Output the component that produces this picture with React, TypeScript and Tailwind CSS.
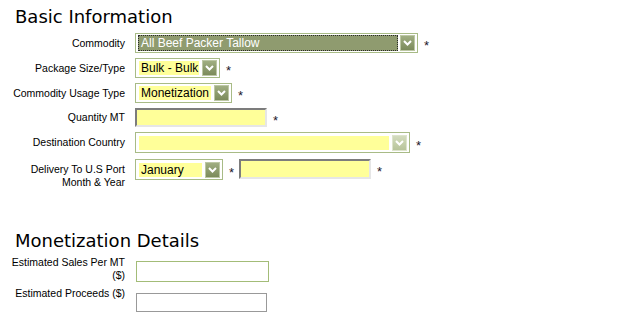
import React from "react";

const Chevron = () => (
  <svg width="9" height="6" viewBox="0 0 9 6">
    <path d="M1 1 L4.5 4.5 L8 1" stroke="white" strokeWidth="2" fill="none" />
  </svg>
);

function DropBtn({ light }: { light?: boolean }) {
  return (
    <div
      className={
        light
          ? "w-[15px] h-[16px] shrink-0 flex items-center justify-center border border-[#dde4cc] bg-linear-to-b from-[#d3dcbd] to-[#b8c49b]"
          : "w-[15px] h-[16px] shrink-0 flex items-center justify-center border border-[#bcc7a4] bg-linear-to-b from-[#a0ae82] to-[#7c8b5b]"
      }
    >
      <Chevron />
    </div>
  );
}

function Select({
  box,
  text,
  selected,
  light,
}: {
  box: string;
  text: string;
  selected?: boolean;
  light?: boolean;
}) {
  return (
    <div
      className={`${box} shrink-0 flex items-center border border-[#a8bb86] bg-white p-[2px] gap-[2px]`}
    >
      {selected ? (
        <div className="flex-1 h-[16px] bg-[#8f9b6f] border border-dotted border-[#2a2a2a] text-white text-[12px] leading-[14px] pl-[2px] whitespace-nowrap overflow-hidden">
          {text}
        </div>
      ) : (
        <div className="flex-1 h-[14px] mx-px bg-[#ffff99] text-black text-[12px] leading-[14px] pl-[2px] whitespace-nowrap overflow-hidden">
          {text}
        </div>
      )}
      <DropBtn light={light} />
    </div>
  );
}

const Star = () => (
  <span className="ml-[6px] text-[13px] leading-[13px] pt-[5px] text-[#1a1a2a]">*</span>
);

const TextIn = ({ box }: { box: string }) => (
  <div
    className={`${box} shrink-0 bg-[#ffff99] border-2 border-t-[#7c7c7c] border-l-[#7c7c7c] border-b-[#e6e6e6] border-r-[#e6e6e6]`}
  />
);

function Label({ children }: { children: React.ReactNode }) {
  return (
    <div className="w-[115px] shrink-0 text-right text-[10.5px] leading-[13px] text-black whitespace-nowrap mr-[10px]">
      {children}
    </div>
  );
}

export default function App() {
  return (
    <div
      className="w-[623px] h-[321px] bg-white overflow-hidden pl-[10px]"
      style={{ fontFamily: '"Liberation Sans", Arial, sans-serif' }}
    >
      <div
        className="pt-[6px] pl-[5px] h-[28px] text-[18px] leading-[22px] text-black"
        style={{ fontFamily: '"DejaVu Sans", Verdana, sans-serif' }}
      >
        Basic Information
      </div>
      <div className="mt-[5px] flex flex-col gap-[5px]">
        <div className="flex items-center">
          <Label>Commodity</Label>
          <Select box="w-[283px] h-[20px]" text="All Beef Packer Tallow" selected />
          <Star />
        </div>
        <div className="flex items-center">
          <Label>Package Size/Type</Label>
          <Select box="w-[85px] h-[20px]" text="Bulk - Bulk" />
          <Star />
        </div>
        <div className="flex items-center">
          <Label>Commodity Usage Type</Label>
          <Select box="w-[97px] h-[20px]" text="Monetization" />
          <Star />
        </div>
        <div className="flex items-center">
          <Label>Quantity MT</Label>
          <TextIn box="w-[132px] h-[19px]" />
          <Star />
        </div>
        <div className="flex items-center">
          <Label>Destination Country</Label>
          <Select box="w-[275px] h-[21px]" text="" light />
          <Star />
        </div>
        <div className="flex items-start mt-[1px]">
          <div className="pt-[4px]">
            <Label>
              Delivery To U.S Port
              <br />
              Month &amp; Year
            </Label>
          </div>
          <Select box="w-[88px] h-[21px]" text="January" />
          <div className="h-[21px] flex items-center">
            <Star />
          </div>
          <div className="ml-[5px]">
            <TextIn box="w-[132px] h-[20px]" />
          </div>
          <div className="h-[20px] flex items-center">
            <Star />
          </div>
        </div>
      </div>
      <div
        className="mt-[41px] pl-[5px] h-[22px] text-[18px] leading-[22px] text-black"
        style={{ fontFamily: '"DejaVu Sans", Verdana, sans-serif' }}
      >
        Monetization Details
      </div>
      <div className="mt-[4px] flex flex-col gap-[5px]">
        <div className="flex items-start">
          <Label>
            Estimated Sales Per MT
            <br />
            ($)
          </Label>
          <div className="mt-[5px] ml-px w-[133px] h-[21px] border border-[#a3bc78] bg-white" />
        </div>
        <div className="flex items-start">
          <Label>Estimated Proceeds ($)</Label>
          <div className="mt-[6px] ml-px w-[131px] h-[19px] border border-[#999999] bg-white" />
        </div>
      </div>
    </div>
  );
}
